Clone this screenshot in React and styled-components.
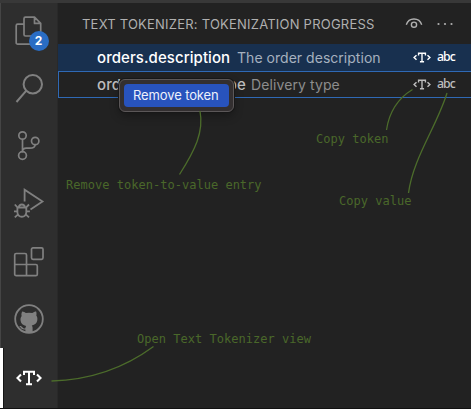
import React from "react";
import styled, { createGlobalStyle } from "styled-components";

const Global = createGlobalStyle`
  * { box-sizing: border-box; }
  body { margin: 0; background: #222; overflow: hidden; }
`;

const Window = styled.div`
  position: relative;
  display: flex;
  width: 471px;
  height: 409px;
  background: #222222;
  border-top: 3px solid #383838;
  border-bottom: 1px solid #111;
  font-family: Inter, "Liberation Sans", sans-serif;
`;

const ActivityBar = styled.nav`
  display: flex;
  flex-direction: column;
  width: 58px;
  height: 405px;
  background: #2e2e2e;
  border-left: 1px solid #454545;
  border-right: 1px solid #292929;
`;

const Activity = styled.div`
  position: relative;
  flex: 0 0 57.7px;
  display: flex;
  align-items: center;
  justify-content: center;
  padding-bottom: ${(p) => (p.$active ? 0 : 2)}px;
  color: ${(p) => (p.$active ? "#fff" : "#808080")};
  svg { display: block; }
  &::before {
    content: "";
    display: ${(p) => (p.$active ? "block" : "none")};
    position: absolute;
    left: -1px;
    top: -1px;
    width: 3px;
    height: 60px;
    background: #fff;
    border-right: 1px solid #151515;
  }
`;

const Badge = styled.span`
  position: absolute;
  left: 27.5px;
  top: 28px;
  width: 20px;
  height: 20px;
  border-radius: 50%;
  background: #2a6dc4;
  color: #fff;
  font-size: 12px;
  font-weight: 700;
  line-height: 20px;
  text-align: center;
`;

const Panel = styled.main`
  flex: 1;
  min-width: 0;
`;

const Header = styled.header`
  display: flex;
  align-items: center;
  height: 41px;
  padding: 0 18px 0 24px;
  color: #b0b0b0;
`;

const Title = styled.h1`
  margin: 1px 0 0;
  flex: 1;
  font-size: 13px;
  font-weight: 400;
  letter-spacing: 0.22px;
  white-space: nowrap;
`;

const HeaderActions = styled.div`
  display: flex;
  align-items: center;
  gap: 14px;
  svg { display: block; }
`;

const Row = styled.div`
  display: flex;
  align-items: center;
  height: 27px;
  padding: 0 16px 0 ${(p) => (p.$selected ? 39 : 38)}px;
  background: ${(p) => (p.$selected ? "#18304f" : "transparent")};
  border: ${(p) => (p.$focused ? "1px solid #2f69b5" : "0")};
  border-right: 0;
  color: ${(p) => (p.$selected ? "#fff" : "#bdbdbd")};
  white-space: nowrap;
`;

const Token = styled.span`
  width: 154px;
  font-size: 15px;
  font-weight: 500;
  letter-spacing: ${(p) => p.$spacing};
`;

const Value = styled.span`
  flex: 1;
  margin-left: ${(p) => p.$offset}px;
  font-size: 14px;
  letter-spacing: ${(p) => p.$spacing};
  color: ${(p) => (p.$selected ? "#a6b1bf" : "#8d8d8d")};
`;

const RowActions = styled.span`
  display: flex;
  align-items: center;
  gap: 6px;
  svg { display: block; }
`;

const CopyValue = styled.span`
  width: 18px;
  margin-top: -1px;
  font: 500 12.3px/14px "Noto Sans", sans-serif;
  letter-spacing: -0.95px;
`;

const ContextMenu = styled.div`
  position: absolute;
  left: 119px;
  top: 76px;
  width: 115px;
  height: 33px;
  padding: 4px;
  background: #332f30;
  border: 1px solid #5b5758;
  border-radius: 6px;
  box-shadow: 0 0 0 1px #171717, 0 4px 10px rgba(0, 0, 0, 0.3);
`;

const MenuItem = styled.div`
  height: 23px;
  padding-left: 9px;
  border-radius: 4px;
  background: #2853bd;
  color: #edf1fb;
  font-size: 13px;
  line-height: 23px;
  letter-spacing: -0.12px;
  white-space: nowrap;
`;

const Callouts = styled.svg`
  position: absolute;
  left: 0;
  top: -3px;
  pointer-events: none;
`;

const Note = styled.span`
  position: absolute;
  left: ${(p) => p.$x}px;
  top: ${(p) => p.$y}px;
  color: #4a682a;
  font: 12px/14px "DejaVu Sans Mono", monospace;
  letter-spacing: 0.02px;
  white-space: nowrap;
`;

function Icon({ children, width = 1.7 }) {
  return (
    <svg width="34" height="34" viewBox="0 0 34 34" fill="none" stroke="currentColor" strokeWidth={width} strokeLinejoin="round">
      {children}
    </svg>
  );
}

function FilesIcon() {
  return (
    <Icon>
      <path d="M13.5 3.2h9l6.200 6.200v12.600h-15.200a1.500 1.500 0 0 1-1.500-1.500V4.700a1.500 1.500 0 0 1 1.500-1.500ZM22.500 3.200v6.200h6.200M11.500 10.200H5.700A1.500 1.500 0 0 0 4.200 11.700v17a1.500 1.500 0 0 0 1.500 1.500h16" />
    </Icon>
  );
}

function SearchIcon() {
  return (
    <Icon width={2}>
      <circle cx="20.8" cy="12.2" r="9.2" />
      <path d="m14.300 18.700-9.800 11.300" />
    </Icon>
  );
}

function BranchIcon() {
  return (
    <Icon>
      <circle cx="10.5" cy="6.5" r="3.7" />
      <circle cx="23.2" cy="12" r="3.7" />
      <circle cx="10.5" cy="26.5" r="3.9" />
      <path d="M10.5 10.2v12.4c0-2 1.5-3.4 3.8-3.4h3.4c3.1 0 5.3-.8 5.500-3.500" />
    </Icon>
  );
}

function DebugIcon() {
  return (
    <Icon width={1.8}>
      <path d="M12.6 14.5V2.7L30.500 14.500l-12 8" strokeLinejoin="miter" />
      <path d="M5.4 20.5h8.9v5a4.5 5 0 0 1-8.9 0ZM6.7 20.3a3.2 3.4 0 0 1 6.3 0M2.8 17.5l2.7 2.8M17 17.5l-2.8 2.8M2 24.3h3.4M14.3 24.3h3.6M2.8 30.4l3-2.7M17 30.4l-3-2.7" />
    </Icon>
  );
}

function ExtensionsIcon() {
  return (
    <Icon>
      <rect x="19.5" y="2.8" width="11.5" height="11.5" rx="1.5" />
      <path d="M4.2 8.5H13a1.5 1.5 0 0 1 1.5 1.5v9.5h9.3a1.5 1.5 0 0 1 1.5 1.5v8.2a1.5 1.5 0 0 1-1.5 1.5H4.2a1.5 1.5 0 0 1-1.5-1.5V10a1.5 1.5 0 0 1 1.5-1.5ZM2.7 19.5h11.8v11.2" />
    </Icon>
  );
}

function GithubIcon() {
  return (
    <Icon width={1.8}>
      <circle cx="17" cy="17" r="13.8" />
      <path
        stroke="none"
        fill="currentColor"
        d="M10 9.5c1.6 0 3 .8 3.8 1.5a16 16 0 0 1 6.5 0c1.2-.9 2.5-1.5 3.8-1.5.6 1.5.5 3 .2 4 .9 1.3 1.3 2.8 1 4.7-.4 3-2.4 4.7-5.5 5.2.6.7.8 1.5.8 2.5v4.500h-7.200v-3c-2.4.5-4-.4-4.800-1.800-.4-.7-.9-1.1-1.4-1.5 1.5-.5 2.6.3 3.4 1.5.7 1 1.7 1 2.8.6.1-.9.3-1.7.8-2.3-3.1-.5-5.2-2.1-5.6-5.2-.3-1.9.1-3.4 1.1-4.7-.4-1-.4-2.5.3-4Z"
      />
    </Icon>
  );
}

function TokenIcon({ width = 26, height = 16 }) {
  return (
    <svg width={width} height={height} viewBox="0 0 26 16" fill="none" stroke="currentColor">
      <path d="M5 4.6 1.5 8 5 11.4M21 4.6 24.5 8 21 11.4" strokeWidth="2.1" />
      <path d="M8 5V1.8h10V5M13 2v12M10 14.2h6" strokeWidth="2" />
    </svg>
  );
}

const activities = [
  [FilesIcon, 2],
  [SearchIcon],
  [BranchIcon],
  [DebugIcon],
  [ExtensionsIcon],
  [GithubIcon],
];

export default function App() {
  return (
    <Window>
      <Global />
      <ActivityBar>
        {activities.map(([Glyph, count], i) => (
          <Activity key={i}>
            <Glyph />
            {count && <Badge>{count}</Badge>}
          </Activity>
        ))}
        <Activity $active>
          <TokenIcon />
        </Activity>
      </ActivityBar>
      <Panel>
        <Header>
          <Title>TEXT TOKENIZER: TOKENIZATION PROGRESS</Title>
          <HeaderActions>
            <svg width="18" height="14" viewBox="0 0 18 14" fill="none" stroke="currentColor" strokeWidth="1.4">
              <path d="M1.300 7.700C2.500 4 5.300 2 9 2s6.500 2 7.700 5.700" />
              <circle cx="9" cy="7.700" r="2.600" />
            </svg>
            <svg width="16" height="4" viewBox="0 0 16 4" fill="currentColor">
              <circle cx="1.5" cy="2" r="1.1" />
              <circle cx="8" cy="2" r="1.1" />
              <circle cx="14.5" cy="2" r="1.1" />
            </svg>
          </HeaderActions>
        </Header>
        <Row $selected>
          <Token $spacing="0.07px">orders.description</Token>
          <Value $offset={-14} $selected $spacing="0.03px">The order description</Value>
          <RowActions>
            <TokenIcon width={18} height={11} />
            <CopyValue>abc</CopyValue>
          </RowActions>
        </Row>
        <Row $focused>
          <Token $spacing="0.12px">orders.delivery_type</Token>
          <Value $offset={0} $spacing="0.1px">Delivery type</Value>
          <RowActions>
            <TokenIcon width={18} height={11} />
            <CopyValue>abc</CopyValue>
          </RowActions>
        </Row>
      </Panel>
      <ContextMenu>
        <MenuItem>Remove token</MenuItem>
      </ContextMenu>
      <Callouts width="471" height="409" fill="none" stroke="#4c6c2b" strokeWidth="1.3">
        <path d="M200 111C204 132 195 150 179.500 174.500" />
        <path d="M412.500 89.500C397 99 389 113 386.500 130" />
        <path d="M447 93C437 126 413 158 408.500 193" />
        <path d="M51.500 381C90 380 123 369 153.500 346.500" />
      </Callouts>
      <Note $x={66} $y={175}>Remove token-to-value entry</Note>
      <Note $x={316} $y={129}>Copy token</Note>
      <Note $x={339} $y={191}>Copy value</Note>
      <Note $x={137} $y={329}>Open Text Tokenizer view</Note>
    </Window>
  );
}
